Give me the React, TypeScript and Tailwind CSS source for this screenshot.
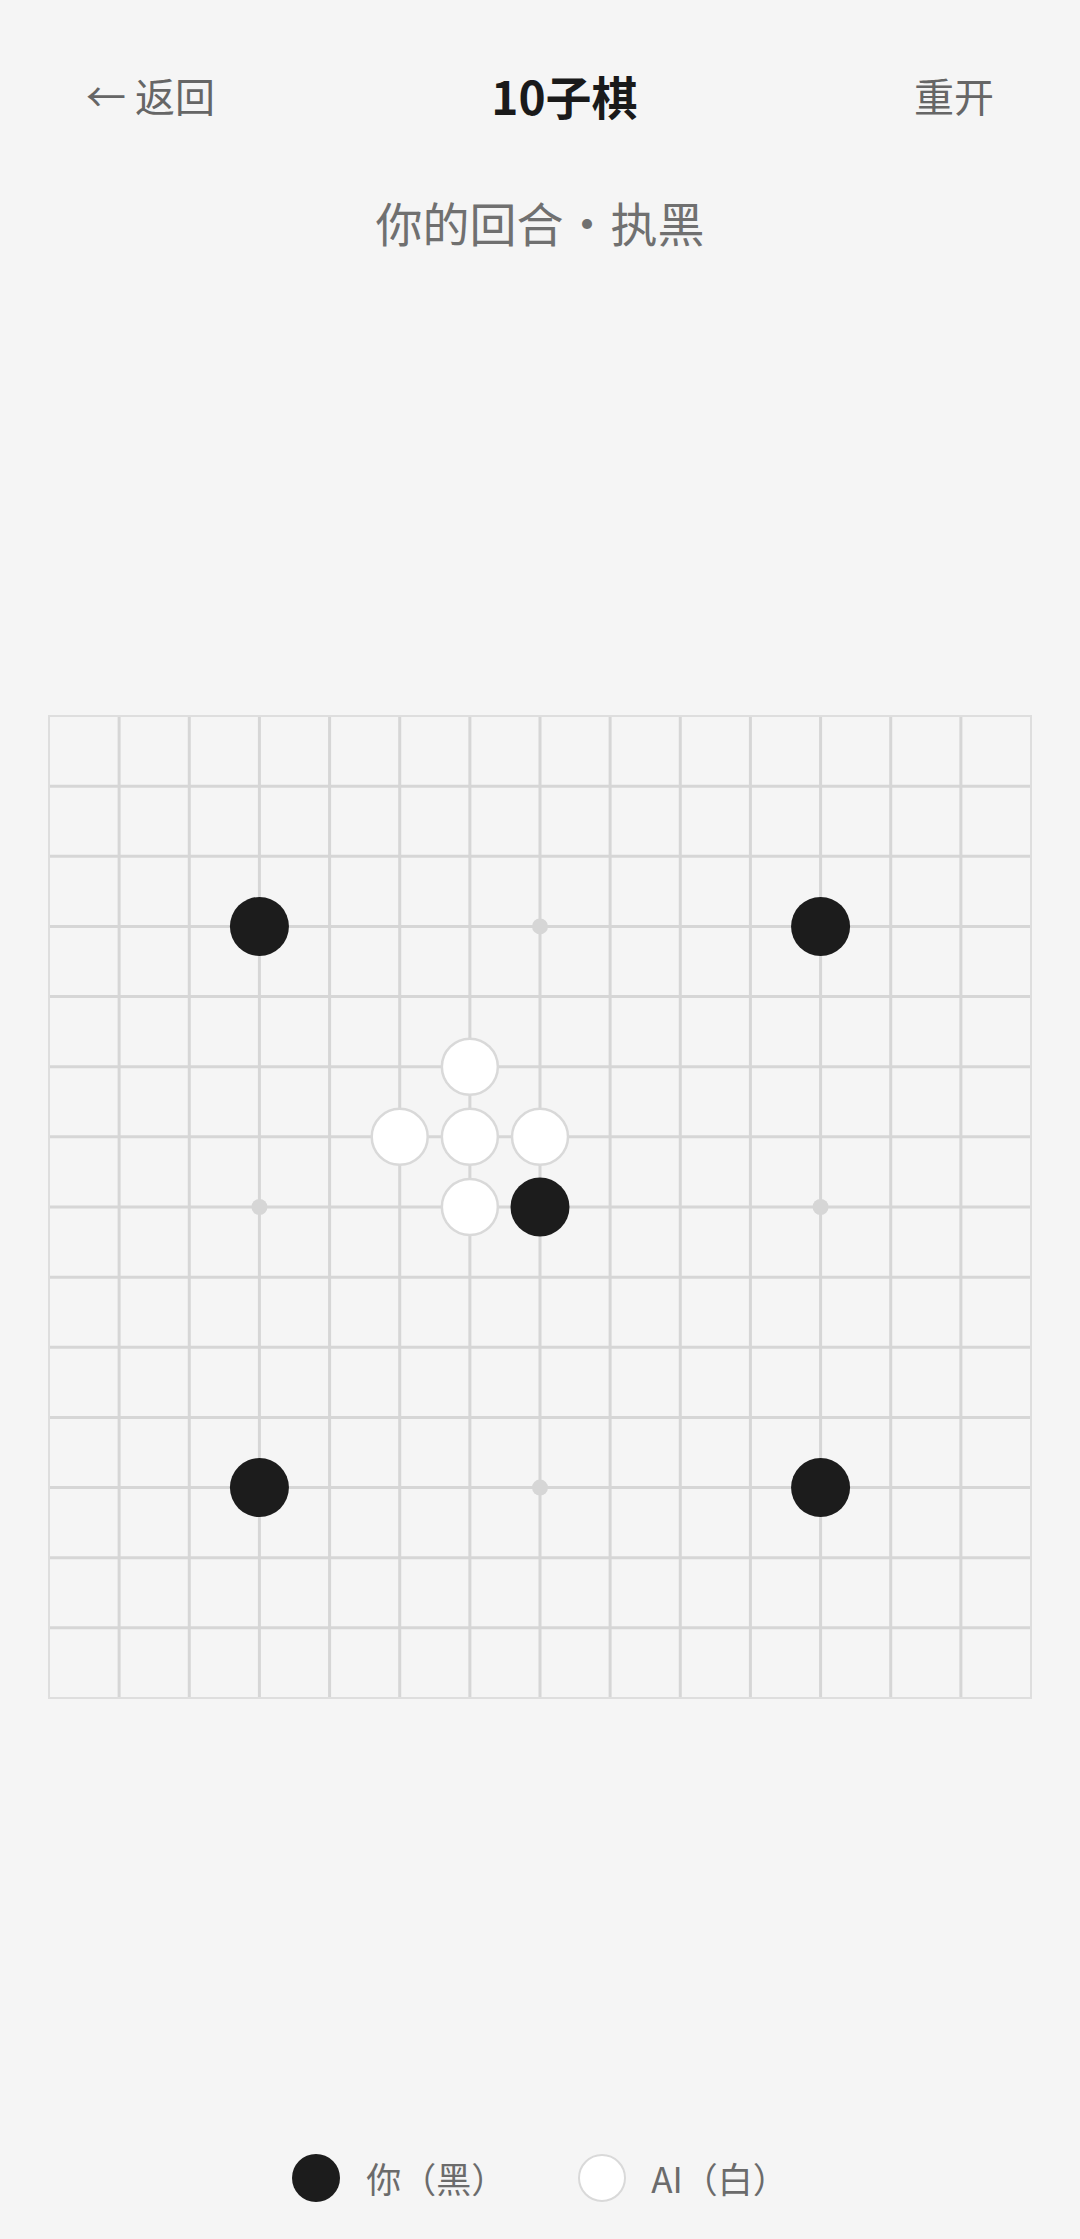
import React from "react";

const N = 15;
const SIZE = 984;
const STEP = (SIZE - 2) / (N - 1);
const pos = (i: number) => 1 + i * STEP;

const blacks: [number, number][] = [
  [3, 3],
  [11, 3],
  [3, 11],
  [11, 11],
  [7, 7],
];
const whites: [number, number][] = [
  [6, 5],
  [5, 6],
  [6, 6],
  [7, 6],
  [6, 7],
];
const stars: [number, number][] = [
  [7, 3],
  [3, 7],
  [11, 7],
  [7, 11],
];

function Board() {
  const lines = [];
  for (let i = 1; i < N - 1; i++) {
    lines.push(
      <line key={"v" + i} x1={pos(i)} y1={0} x2={pos(i)} y2={SIZE} stroke="#d6d6d6" strokeWidth={3} />
    );
    lines.push(
      <line key={"h" + i} x1={0} y1={pos(i)} x2={SIZE} y2={pos(i)} stroke="#d6d6d6" strokeWidth={3} />
    );
  }
  return (
    <svg width={SIZE} height={SIZE} viewBox={`0 0 ${SIZE} ${SIZE}`} className="block">
      {lines}
      <rect x={1} y={1} width={SIZE - 2} height={SIZE - 2} fill="none" stroke="#dedede" strokeWidth={2} />
      {stars.map(([c, r]) => (
        <circle key={`s${c}-${r}`} cx={pos(c)} cy={pos(r)} r={8} fill="#d6d6d6" />
      ))}
      {whites.map(([c, r]) => (
        <circle key={`w${c}-${r}`} cx={pos(c)} cy={pos(r)} r={28} fill="#ffffff" stroke="#d9d9d9" strokeWidth={2.5} />
      ))}
      {blacks.map(([c, r]) => (
        <circle key={`b${c}-${r}`} cx={pos(c)} cy={pos(r)} r={29.5} fill="#1c1c1c" />
      ))}
    </svg>
  );
}

export default function App() {
  return (
    <div
      className="min-h-[2239px] w-[1080px] bg-[#f5f5f5] flex flex-col"
      style={{ fontFamily: '"Noto Sans CJK SC", "Noto Sans", sans-serif' }}
    >
      <div className="pt-[70px] px-[86px] flex items-center justify-between h-[120px]">
        <div className="text-[40px] leading-[50px] text-[#666666]">← 返回</div>
        <div className="text-[46px] leading-[50px] font-bold text-[#1a1a1a]">10子棋</div>
        <div className="text-[40px] leading-[50px] text-[#666666]">重开</div>
      </div>
      <div className="mt-[72px] text-center text-[47px] leading-[60px] text-[#707070]">你的回合·执黑</div>
      <div className="flex-1 flex items-center justify-center pt-[8px]">
        <Board />
      </div>
      <div className="flex items-center justify-center gap-[72px] pb-[37px]">
        <div className="flex items-center gap-[26px]">
          <div className="w-[48px] h-[48px] rounded-full bg-[#1c1c1c]" />
          <span className="text-[35px] leading-[48px] text-[#6b6b6b]">你（黑）</span>
        </div>
        <div className="flex items-center gap-[25px]">
          <div className="w-[48px] h-[48px] rounded-full bg-white border-[2.5px] border-[#d9d9d9]" />
          <span className="text-[35px] leading-[48px] text-[#6b6b6b]">AI（白）</span>
        </div>
      </div>
    </div>
  );
}
